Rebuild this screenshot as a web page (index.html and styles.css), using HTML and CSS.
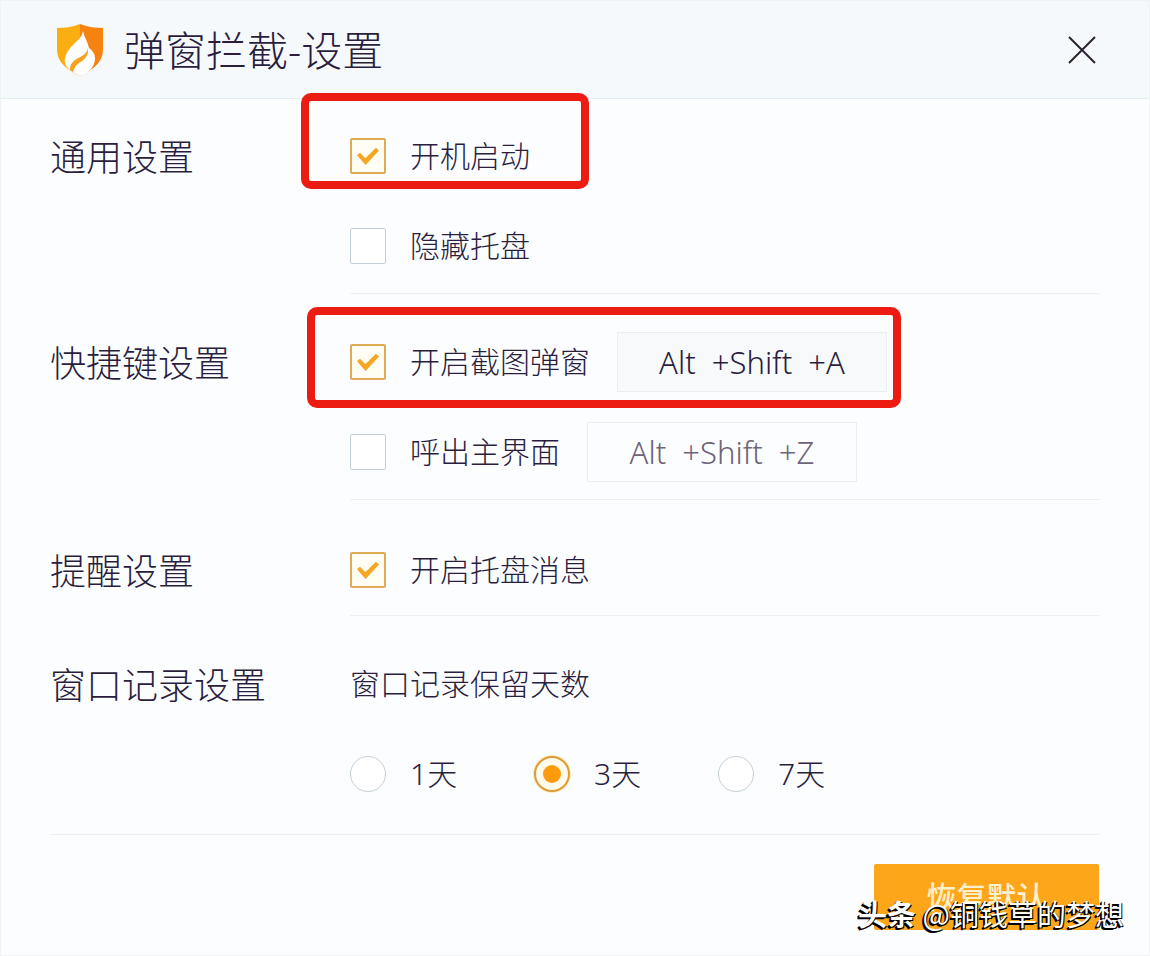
FILE: index.html
```html
<!DOCTYPE html>
<html lang="zh-CN">
<head>
<meta charset="utf-8">
<meta name="viewport" content="width=device-width, initial-scale=1">
<title>弹窗拦截-设置</title>
<link rel="stylesheet" href="styles.css">
</head>
<body>
<div class="window">
  <header class="titlebar">
    <svg class="logo" viewBox="0 0 48 52" aria-hidden="true">
      <path fill="#fbae12" d="M24 0C16 3 8 4 1 4v22c0 12 10 20 23 26z"/>
      <path fill="#f6820f" d="M24 0c8 3 16 4 23 4v22c0 12-10 20-23 26z"/>
      <path fill="#fff" d="M27 7c-1 6-5 9-10 14-6 6-9 12-8 18 1 5 7 9 15 13 9-3 15-9 15-18 0-4-2-7-6-10-1-6-5-11-6-17z"/>
      <path fill="#f8a01c" d="M32 24c1 8-4 12-9 15-3 2-5 5-6 9l-3-2c0-6 3-9 8-12 5-2 9-5 10-10z"/>
    </svg>
    <h1 class="title">弹窗拦截-设置</h1>
    <button class="close" type="button" aria-label="关闭">
      <svg viewBox="0 0 28 28" aria-hidden="true"><path d="M1 1l26 26M27 1L1 27"/></svg>
    </button>
  </header>

  <main class="settings">
    <section class="section section-first">
      <h2 class="heading">通用设置</h2>
      <div class="rows">
        <div class="row highlight highlight-startup">
          <label class="option"><input class="check" type="checkbox" checked>开机启动</label>
        </div>
        <div class="row">
          <label class="option"><input class="check" type="checkbox">隐藏托盘</label>
        </div>
      </div>
    </section>

    <section class="section">
      <h2 class="heading">快捷键设置</h2>
      <div class="rows">
        <div class="row highlight highlight-capture">
          <label class="option"><input class="check" type="checkbox" checked>开启截图弹窗</label>
          <input class="shortcut shortcut-active" type="text" value="Alt  +Shift  +A" aria-label="开启截图弹窗快捷键">
        </div>
        <div class="row">
          <label class="option"><input class="check" type="checkbox">呼出主界面</label>
          <input class="shortcut" type="text" value="Alt  +Shift  +Z" aria-label="呼出主界面快捷键">
        </div>
      </div>
    </section>

    <section class="section section-notice">
      <h2 class="heading">提醒设置</h2>
      <div class="rows">
        <div class="row">
          <label class="option"><input class="check" type="checkbox" checked>开启托盘消息</label>
        </div>
      </div>
    </section>

    <section class="section section-last">
      <h2 class="heading">窗口记录设置</h2>
      <div class="rows">
        <p class="row note" id="days">窗口记录保留天数</p>
        <div class="radios" role="radiogroup" aria-labelledby="days">
          <label class="option"><input class="radio" type="radio" name="days">1天</label>
          <label class="option"><input class="radio" type="radio" name="days" checked>3天</label>
          <label class="option"><input class="radio" type="radio" name="days">7天</label>
        </div>
      </div>
    </section>
  </main>

  <footer class="footer">
    <button class="reset" type="button">恢复默认</button>
    <span class="watermark"><b>头条</b> @铜钱草的梦想</span>
  </footer>
</div>
</body>
</html>
```
FILE: styles.css
```css
* {
  box-sizing: border-box;
}

body {
  margin: 0;
  background: #fcfdff;
  color: #2a1d3e;
  font-family: "Noto Sans", "Noto Sans CJK SC", sans-serif;
  font-weight: 300;
}

input,
button {
  font: inherit;
  color: inherit;
}

.window {
  min-height: 100vh;
  border: 1px solid #edf3f7;
}

.titlebar {
  display: flex;
  align-items: center;
  height: 98px;
  padding: 0 53px 0 55px;
  background: #f6f9fc;
  border-bottom: 1px solid #e4edf1;
}

.logo {
  width: 48px;
  height: 52px;
  margin-right: 20px;
}

.title {
  margin: 0 auto 0 0;
  font-size: 41px;
  font-weight: 300;
  line-height: 48px;
}

.close {
  display: flex;
  padding: 0;
  border: 0;
  background: none;
}

.close svg {
  width: 28px;
  height: 28px;
  fill: none;
  stroke: #2a2230;
  stroke-width: 2;
}

.settings {
  padding: 0 50px 0 49px;
}

.section {
  display: grid;
  grid-template-columns: 300px 1fr;
}

.heading {
  margin: 0;
  padding-top: 40px;
  font-size: 36px;
  font-weight: 300;
  line-height: 60px;
}

.rows {
  display: flex;
  flex-direction: column;
  gap: 30px;
  padding: 38px 0 17px;
  border-bottom: 1px solid #e9f1f5;
}

.section-first .heading {
  padding-top: 29px;
}

.section-first .rows {
  padding-top: 27px;
}

.section-notice .heading {
  padding-top: 42px;
}

.section-notice .rows {
  padding: 40px 0 15px;
}

.section-last {
  border-bottom: 1px solid #e9f1f5;
}

.section-last .rows {
  padding-bottom: 30px;
  border-bottom: 0;
}

.row {
  position: relative;
  display: flex;
  align-items: center;
  align-self: flex-start;
  gap: 27px;
  height: 60px;
  margin: 0;
}

.note,
.option {
  font-size: 30px;
  line-height: 60px;
}

.option {
  display: flex;
  align-items: center;
  gap: 24px;
}

.check,
.radio {
  appearance: none;
  display: grid;
  place-items: center;
  width: 36px;
  height: 36px;
  margin: 0;
  border: 1px solid #c3cfd6;
  background: #fff;
}

.check {
  border-radius: 2px;
}

.check:checked {
  border: 2px solid #dfaa52;
  background: #fffdf4;
}

.check:checked::before {
  content: "";
  width: 22px;
  height: 18px;
  background: #f5a623;
  clip-path: polygon(0 46%, 14% 32%, 38% 62%, 86% 4%, 100% 20%, 39% 100%);
}

.radio {
  border-radius: 50%;
}

.radio:checked {
  border: 2px solid #dd9c3c;
  background: #fffbea;
  box-shadow: 0 0 0 1px #ffe9bd;
}

.radio:checked::before {
  content: "";
  width: 18px;
  height: 18px;
  border-radius: 50%;
  background: #fd9b0c;
}

.radios {
  display: grid;
  grid-template-columns: repeat(3, 184px);
}

.shortcut {
  width: 270px;
  height: 60px;
  padding: 0;
  border: 1px solid #e8eff3;
  background: #fcfdff;
  color: #6e6478;
  font-size: 31px;
  text-align: center;
}

.shortcut-active {
  background: #f8f9fb;
  color: #2a1d3e;
}

.highlight::after {
  content: "";
  position: absolute;
  border: 8px solid #ed1c12;
  border-radius: 10px;
  pointer-events: none;
}

.highlight-startup::after {
  inset: -33px -59px -3px -49px;
}

.highlight-capture::after {
  inset: -25px -14px -16px -43px;
}

.footer {
  position: relative;
  display: flex;
  justify-content: flex-end;
  padding: 29px 50px 24px;
}

.reset {
  width: 225px;
  height: 66px;
  padding: 0 0 4px;
  border: 0;
  border-radius: 2px;
  background: #fea61a;
  color: #fff0cc;
  font-size: 30px;
  font-weight: 500;
}

.watermark {
  position: absolute;
  right: 25px;
  bottom: 21px;
  color: #fff;
  font-family: "Noto Sans CJK SC", sans-serif;
  font-size: 29px;
  font-weight: 400;
  line-height: 40px;
  text-shadow: -1px 1px 0 #000, -2px 2px 0 #000, 1px 1px 0 #000;
  white-space: nowrap;
}
```
